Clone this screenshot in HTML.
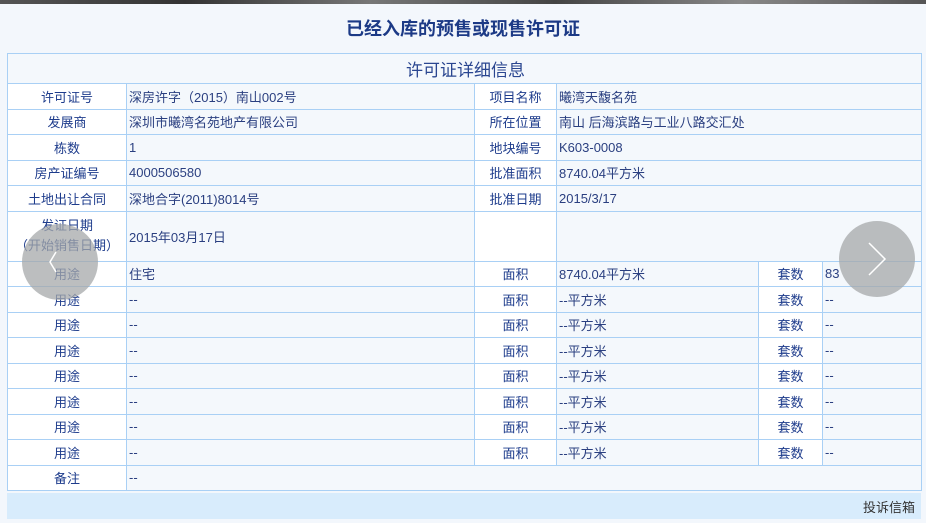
<!DOCTYPE html>
<html><head><meta charset="utf-8"><style>
body{margin:0;width:926px;height:519px;overflow:hidden;background:#f3f7fc;font-family:"Liberation Sans","Noto Sans CJK SC",sans-serif;position:relative}
.top{position:absolute;left:0;top:0;width:926px;height:4px;background:linear-gradient(90deg,#555,#333 20%,#777 40%,#444 60%,#888 80%,#555)}
h1{position:absolute;top:15px;left:0;width:926px;margin:0;text-align:center;font-size:18px;font-weight:bold;color:#1c3a86;font-family:"Noto Sans CJK SC",sans-serif}
table{position:absolute;left:7px;top:53px;width:914px;border-collapse:collapse;table-layout:fixed;font-size:13px}
td{border:1px solid #a9d0f5;height:24.5px;padding:0 0 0 2px;color:#2a3f80;background:#f4f8fc;white-space:nowrap;overflow:hidden}
td.l{background:#fff;text-align:center;padding:0;color:#1e3c8c}
td.h{text-align:center;font-size:17px;height:29px;color:#2a4690}
.c{position:absolute;width:76px;height:76px;border-radius:50%;background:rgba(165,168,170,0.75)}
.c svg{position:absolute;left:0;top:0}
.bar{position:absolute;left:7px;top:493px;width:914px;height:26px;background:#d8ecfc;font-size:13px;color:#333;text-align:right;line-height:30px}
</style></head><body>
<div class="top"></div>
<h1>已经入库的预售或现售许可证</h1>
<table>
<colgroup><col style="width:119px"><col style="width:348px"><col style="width:82px"><col style="width:202px"><col style="width:64px"><col style="width:99px"></colgroup>
<tr><td class="h" colspan="6">许可证详细信息</td></tr>
<tr><td class="l">许可证号</td><td>深房许字（2015）南山002号</td><td class="l">项目名称</td><td colspan="3">曦湾天馥名苑</td></tr>
<tr><td class="l">发展商</td><td>深圳市曦湾名苑地产有限公司</td><td class="l">所在位置</td><td colspan="3">南山 后海滨路与工业八路交汇处</td></tr>
<tr><td class="l">栋数</td><td>1</td><td class="l">地块编号</td><td colspan="3">K603-0008</td></tr>
<tr><td class="l">房产证编号</td><td>4000506580</td><td class="l">批准面积</td><td colspan="3">8740.04平方米</td></tr>
<tr><td class="l">土地出让合同</td><td>深地合字(2011)8014号</td><td class="l">批准日期</td><td colspan="3">2015/3/17</td></tr>
<tr><td class="l" style="height:49px;line-height:20px">发证日期<br>（开始销售日期）</td><td>2015年03月17日</td><td class="l"></td><td colspan="3"></td></tr>
<tr><td class="l">用途</td><td>住宅</td><td class="l">面积</td><td>8740.04平方米</td><td class="l">套数</td><td>83</td></tr>
<tr><td class="l">用途</td><td>--</td><td class="l">面积</td><td>--平方米</td><td class="l">套数</td><td>--</td></tr>
<tr><td class="l">用途</td><td>--</td><td class="l">面积</td><td>--平方米</td><td class="l">套数</td><td>--</td></tr>
<tr><td class="l">用途</td><td>--</td><td class="l">面积</td><td>--平方米</td><td class="l">套数</td><td>--</td></tr>
<tr><td class="l">用途</td><td>--</td><td class="l">面积</td><td>--平方米</td><td class="l">套数</td><td>--</td></tr>
<tr><td class="l">用途</td><td>--</td><td class="l">面积</td><td>--平方米</td><td class="l">套数</td><td>--</td></tr>
<tr><td class="l">用途</td><td>--</td><td class="l">面积</td><td>--平方米</td><td class="l">套数</td><td>--</td></tr>
<tr><td class="l">用途</td><td>--</td><td class="l">面积</td><td>--平方米</td><td class="l">套数</td><td>--</td></tr>
<tr><td class="l">备注</td><td colspan="5">--</td></tr>
</table>
<div class="c" style="left:22px;top:224px"><svg width="76" height="76"><path d="M34 48 L28 38 L34 28" fill="none" stroke="#fff" stroke-width="1.5"/></svg></div>
<div class="c" style="left:839px;top:221px"><svg width="76" height="76"><path d="M30 22 L46 38 L30 54" fill="none" stroke="#fff" stroke-width="1.5"/></svg></div>
<div class="bar"><span style="margin-right:6px">投诉信箱</span></div>
</body></html>
